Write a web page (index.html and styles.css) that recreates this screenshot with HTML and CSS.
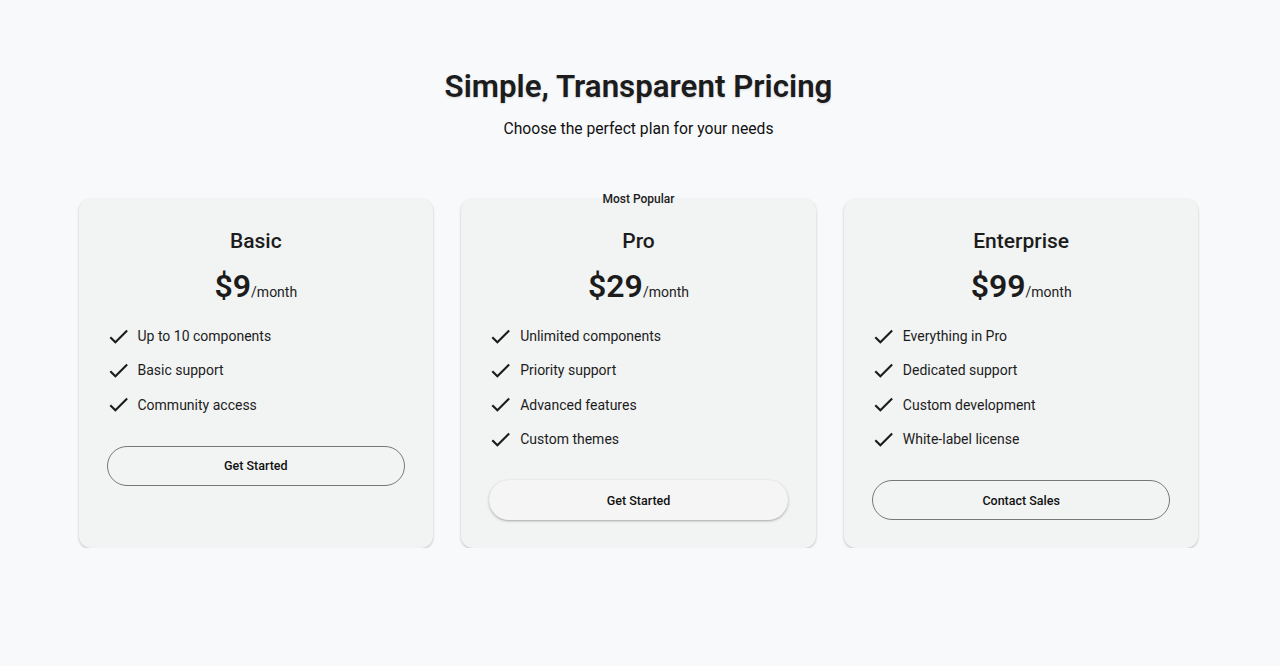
FILE: index.html
```html
<!DOCTYPE html>
<html lang="en">
<head>
  <meta charset="UTF-8" />
  <meta name="viewport" content="width=device-width, initial-scale=1.0"/>
  <title>Pricing</title>
  <link rel="stylesheet" href="styles.css">
</head>
<body>

  <section class="pricing">
    <h1>Simple, Transparent Pricing</h1>
    <p class="subtitle">Choose the perfect plan for your needs</p>

    <div class="plans">
      <div class="plan">
        <h2>Basic</h2>
        <div class="price"><span class="amount">$9</span><span class="period">/month</span></div>
        <ul class="features">
          <li><svg viewBox="0 0 24 24"><path d="M9 16.17L4.83 12l-1.42 1.41L9 19 21 7l-1.41-1.41z"/></svg>Up to 10 components</li>
          <li><svg viewBox="0 0 24 24"><path d="M9 16.17L4.83 12l-1.42 1.41L9 19 21 7l-1.41-1.41z"/></svg>Basic support</li>
          <li><svg viewBox="0 0 24 24"><path d="M9 16.17L4.83 12l-1.42 1.41L9 19 21 7l-1.41-1.41z"/></svg>Community access</li>
        </ul>
        <button class="btn">Get Started</button>
      </div>

      <div class="plan popular">
        <span class="badge">Most Popular</span>
        <h2>Pro</h2>
        <div class="price"><span class="amount">$29</span><span class="period">/month</span></div>
        <ul class="features">
          <li><svg viewBox="0 0 24 24"><path d="M9 16.17L4.83 12l-1.42 1.41L9 19 21 7l-1.41-1.41z"/></svg>Unlimited components</li>
          <li><svg viewBox="0 0 24 24"><path d="M9 16.17L4.83 12l-1.42 1.41L9 19 21 7l-1.41-1.41z"/></svg>Priority support</li>
          <li><svg viewBox="0 0 24 24"><path d="M9 16.17L4.83 12l-1.42 1.41L9 19 21 7l-1.41-1.41z"/></svg>Advanced features</li>
          <li><svg viewBox="0 0 24 24"><path d="M9 16.17L4.83 12l-1.42 1.41L9 19 21 7l-1.41-1.41z"/></svg>Custom themes</li>
        </ul>
        <button class="btn btn-filled">Get Started</button>
      </div>

      <div class="plan">
        <h2>Enterprise</h2>
        <div class="price"><span class="amount">$99</span><span class="period">/month</span></div>
        <ul class="features">
          <li><svg viewBox="0 0 24 24"><path d="M9 16.17L4.83 12l-1.42 1.41L9 19 21 7l-1.41-1.41z"/></svg>Everything in Pro</li>
          <li><svg viewBox="0 0 24 24"><path d="M9 16.17L4.83 12l-1.42 1.41L9 19 21 7l-1.41-1.41z"/></svg>Dedicated support</li>
          <li><svg viewBox="0 0 24 24"><path d="M9 16.17L4.83 12l-1.42 1.41L9 19 21 7l-1.41-1.41z"/></svg>Custom development</li>
          <li><svg viewBox="0 0 24 24"><path d="M9 16.17L4.83 12l-1.42 1.41L9 19 21 7l-1.41-1.41z"/></svg>White-label license</li>
        </ul>
        <button class="btn">Contact Sales</button>
      </div>
    </div>
  </section>

</body>
</html>
```

FILE: styles.css
```css
body {
  margin: 0;
  font-family: Roboto, 'Liberation Sans', sans-serif;
  background: #f8f9fb;
  color: #1c1c1c;
}

.pricing {
  max-width: 1120px;
  margin: 0 auto;
  padding: 68px 3px 0 0;
  text-align: center;
}

h1 {
  margin: 0;
  font-size: 31.3px;
  line-height: 38px;
  font-weight: 600;
  text-shadow: 0 1px 2px rgba(0, 0, 0, 0.15);
}

.subtitle {
  margin: 11px 0 0;
  font-size: 15.7px;
  line-height: 24px;
  color: #111;
}

.plans {
  display: grid;
  grid-template-columns: repeat(3, 1fr);
  gap: 28px;
  margin-top: 58px;
}

.plan {
  position: relative;
  display: flex;
  flex-direction: column;
  align-items: stretch;
  background: #f2f3f3;
  border-radius: 12px;
  padding: 28px;
  box-shadow: 0 1px 3px rgba(0, 0, 0, 0.2), 0 1px 1px rgba(0, 0, 0, 0.06);
}

.badge {
  position: absolute;
  top: -8px;
  left: 50%;
  transform: translateX(-50%);
  font-size: 12px;
  line-height: 16px;
  font-weight: 500;
  white-space: nowrap;
}

.plan h2 {
  margin: 0;
  font-size: 21px;
  line-height: 28px;
  font-weight: 500;
}

.price {
  margin-top: 11px;
  line-height: 40px;
}

.amount {
  font-size: 32px;
  font-weight: 600;
}

.period {
  font-size: 14px;
  color: #222;
}

.features {
  list-style: none;
  margin: 7px 0 0 -1px;
  padding: 0;
  text-align: left;
}

.features li {
  display: flex;
  align-items: center;
  height: 34.3px;
  font-size: 14px;
  color: #1c1c1c;
}

.features svg {
  width: 25px;
  height: 25px;
  margin-right: 7px;
  fill: #1c1c1c;
  flex-shrink: 0;
}

.btn {
  margin-top: 24px;
  height: 40px;
  border-radius: 20px;
  border: 1px solid #777;
  background: transparent;
  font-family: inherit;
  font-size: 12.5px;
  font-weight: 500;
  color: #111;
  cursor: pointer;
}

.btn-filled {
  border: none;
  background: #f5f5f5;
  box-shadow: 0 1px 3px rgba(0, 0, 0, 0.25), 0 1px 1px rgba(0, 0, 0, 0.08);
}
```
